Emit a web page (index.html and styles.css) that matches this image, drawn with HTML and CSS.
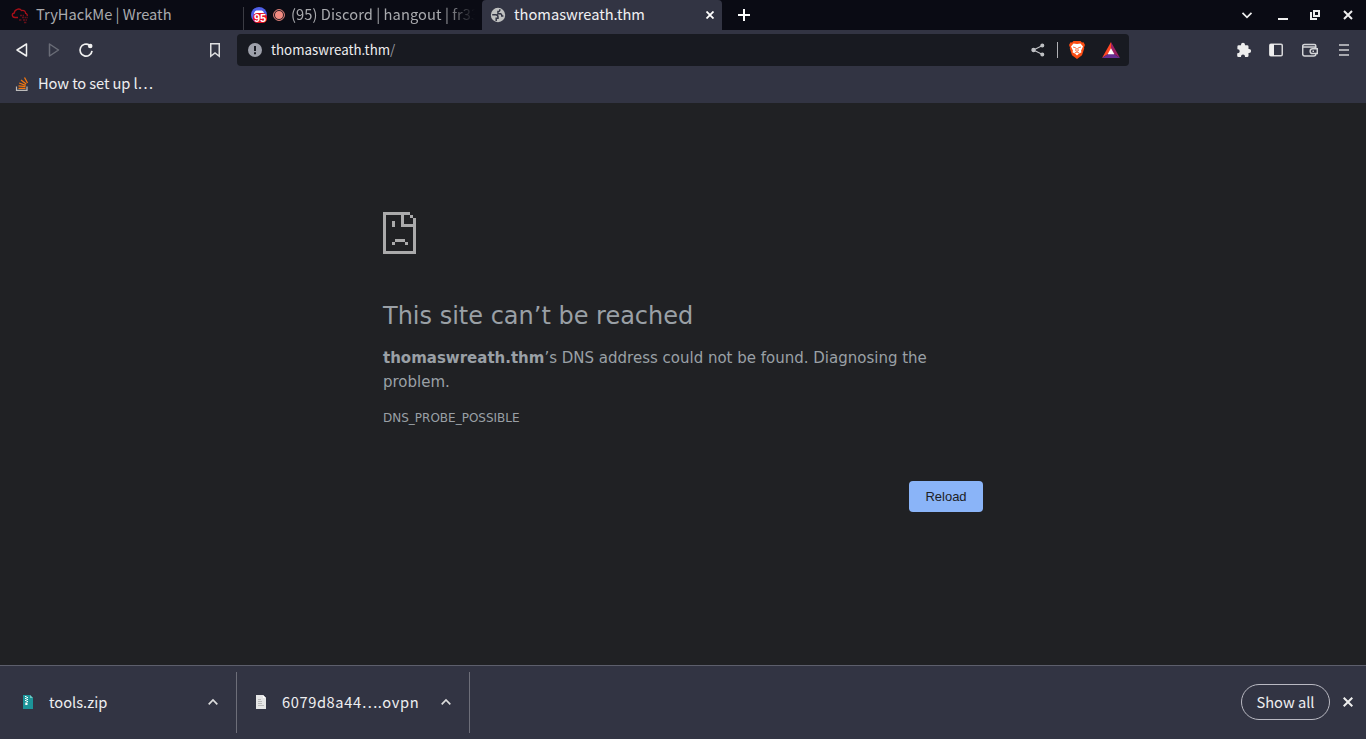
FILE: index.html
```html
<!DOCTYPE html>
<html lang="en">
<head>
<meta charset="utf-8">
<title>thomaswreath.thm</title>
<link rel="stylesheet" href="styles.css">
</head>
<body>
<header class="tabs">
  <div class="tab tab-first">
    <svg class="fav" width="18" height="18" viewBox="0 0 18 18" fill="none" stroke="#a80f18" stroke-width="1.3"><path d="M7 11.500H4C.7 11.300.4 7.600 3.300 7 3.400 3.300 8.500 1.600 10.600 4.600c2.400-.8 4 .7 4 2.700 1.500.5 1.900 1.700 1.500 2.700"/><path d="M9 9.500h4M11 11.500h6M8 14h3M12 14h4M13 16.500h3" stroke="#64101a" stroke-dasharray="2 .6"/></svg>
    <span class="t-thm">TryHackMe | Wreath</span>
  </div>
  <div class="tab tab-second">
    <svg width="18" height="18" viewBox="0 0 18 18"><circle cx="9" cy="9" r="8" fill="#5060e8"/><path d="M4 8q0-3 2.500-3.500h5Q14 5 14 8" fill="#fff"/><rect x="3" y="7" width="14" height="10" rx="4.500" fill="#e81123"/><text x="10" y="15.500" class="badge-text" text-anchor="middle">95</text></svg>
    <svg class="rec" width="12" height="12" viewBox="0 0 12 12"><circle cx="6" cy="6" r="5.400" fill="none" stroke="#f28b82"/><circle cx="6" cy="6" r="4" fill="#f28b82"/></svg>
    <span class="t-discord">(95) Discord | hangout | fr33</span>
  </div>
  <div class="tab tab-active">
    <svg width="16" height="16" viewBox="0 0 16 16"><circle cx="8" cy="8" r="7.200" fill="#bfc0c0"/><path d="M2.200 7.800h3.600q2.200.2 2.200 2.200v1.300H6.200v2.800M9.800 2.200v1.300q0 1-1.800 1v2.300h2.700q1.100.3 1.100 2.300h1.600" fill="none" stroke="#323443" stroke-width="1.500"/></svg>
    <span class="t-active">thomaswreath.thm</span>
    <svg class="tab-close" width="8" height="8" viewBox="0 0 8 8" stroke="#fff" stroke-width="1.800"><path d="M.5.5l7 7M7.500.5l-7 7"/></svg>
  </div>
  <svg class="plus" width="12" height="12" viewBox="0 0 12 12" stroke="#fff" stroke-width="2"><path d="M6 0v12M0 6h12"/></svg>
  <div class="window-buttons">
    <svg width="12" height="12" viewBox="0 0 12 12" fill="none" stroke="#eee" stroke-width="1.700"><path d="M1.500 3.800 6 8.300l4.500-4.500"/></svg>
    <svg width="10" height="12" viewBox="0 0 10 12"><path d="M0 9h10v2H0z" fill="#eee"/></svg>
    <svg width="10" height="12" viewBox="0 0 10 12" fill="none" stroke="#eee" stroke-width="2"><path d="M4 2h5v5H4zM1 3v7h6"/></svg>
    <svg width="10" height="12" viewBox="0 0 10 12" stroke="#eee" stroke-width="2"><path d="M1 2l8 8M9 2l-8 8"/></svg>
  </div>
</header>
<nav class="toolbar">
  <svg class="back" width="16" height="16" viewBox="0 0 16 16" fill="none" stroke="#f0f0f0" stroke-width="1.500" stroke-linejoin="round"><path d="M12.500 2v12L3 8z"/></svg>
  <svg class="forward" width="16" height="16" viewBox="0 0 16 16" fill="none" stroke="#6a6c77" stroke-width="1.500" stroke-linejoin="round"><path d="M3.500 2v12L12.500 8z"/></svg>
  <svg class="reload-icon" width="16" height="16" viewBox="0 0 16 16"><path d="M11.500 3.200A6 6 0 1 0 14 8.800" fill="none" stroke="#f0f0f0" stroke-width="1.700"/><circle cx="12.200" cy="4" r="2.300" fill="#f0f0f0"/></svg>
  <svg class="bookmark" width="12" height="16" viewBox="0 0 12 16" fill="none" stroke="#dedee0" stroke-width="1.500"><path d="M1.750 1.750h8.500v12.500L6 11l-4.250 3.250z"/></svg>
  <div class="address">
    <svg width="14" height="14" viewBox="0 0 14 14"><circle cx="7" cy="7" r="7" fill="#9da0aa"/><path d="M6 3h2v5H6zM6 9.300h2v2H6z" fill="#181a21"/></svg>
    <span class="t-url">thomaswreath.thm<i>/</i></span>
    <svg class="share" width="14" height="14" viewBox="0 0 14 14" fill="#bfc0c4" stroke="#bfc0c4" stroke-width="1.200"><path d="M11.500 2.500 2.500 7l9 4.500" fill="none"/><circle cx="2.500" cy="7" r="1.600"/><circle cx="11.300" cy="2.500" r="1.400"/><circle cx="11.300" cy="11.500" r="1.400"/></svg>
    <span class="split"></span>
    <svg class="brave" width="16" height="18" viewBox="0 0 16 18"><path d="M4.500 0h7l1.500 1.500 1.500-.2L16 4l-1 2.500.2 1L13 14.200 8 18l-5-3.800L.8 7.500l.2-1L0 4l1.500-2.700 1.500.2z" fill="#fb4c12"/><path d="M4.500 2.500 8 3l3.500-.5L14 5.500 12 9.700l.5 1.500-2.700 1.500L8 14.500l-1.800-1.800-2.700-1.500L4 9.700 2 5.500z" fill="#fff"/><path d="M4 6l2.800.8M12 6l-2.800.8M7.300 7 6.700 9.700 8 10.300l1.300-.6L8.700 7M5.800 12 8 11l2.200 1" fill="none" stroke="#fb4c12" stroke-width=".8"/></svg>
    <svg class="bat" width="18" height="16" viewBox="0 0 18 16"><path d="M9 0 0 16l9-6z" fill="#ff4724"/><path d="M9 0v10l9 6z" fill="#9e1f63"/><path d="M0 16l9-6 9 6z" fill="#662d91"/><path d="M9 6.200 5.600 12.300h6.800z" fill="#fff"/></svg>
  </div>
  <div class="actions">
    <svg width="16" height="16" viewBox="0 0 16 16"><path d="M2.800 3.300H5V2.800a2 2 0 0 1 4 0v.5h2.200q1.300 0 1.300 1.300V7h.6a2 2 0 0 1 0 4h-.6v2.700q0 1.300-1.300 1.300H9v-.6a2 2 0 0 0-4 0v.6H2.500q-1.300 0-1.300-1.300V11.300h.5a2 2 0 0 0 0-4h-.3V4.600q0-1.300 1.400-1.300z" fill="#eee"/></svg>
    <svg width="14" height="16" viewBox="0 0 14 16"><rect x=".75" y="2.250" width="12.500" height="11.500" rx="1.200" fill="none" stroke="#d7d7d9" stroke-width="1.500"/><path d="M1 2h4v12H1z" fill="#eee"/></svg>
    <svg class="wallet" width="16" height="16" viewBox="0 0 16 16" fill="none" stroke="#d3d4d7" stroke-width="1.500"><path d="M13.800 6V4q0-1.500-1.500-1.500H2.500Q.7 2.500.7 4.200V12q0 2 2 2h9.100q2 0 2-2M1 5h11.500l1.300 1.200"/><path d="M15.300 6.800v4.700H10.500a2.350 2.350 0 0 1 0-4.700zM10.500 9.200H12"/></svg>
    <svg width="10" height="16" viewBox="0 0 10 16" stroke="#cfd0d3" stroke-width="1.700"><path d="M0 3h10M0 8h10M0 13h10"/></svg>
  </div>
</nav>
<div class="bookmarks">
  <svg width="14" height="16" viewBox="0 0 14 16" fill="none"><path d="M1.500 10.500V14.300h10.500v-3.800" stroke="#bcbbbb" stroke-width="1.200"/><path d="M3.500 12.300h7M3.500 9.800l7 .9M4.200 7l6.500 2.300M6 4l5.200 4M9.500 1.500l3 5.500" stroke="#f47810" stroke-width="1.300"/></svg>
  <span class="t-bookmark">How to set up l…</span>
</div>
<main class="page">
  <div class="error">
    <svg class="sad" width="33" height="42" viewBox="0 0 33 42" fill="#aaaaab" shape-rendering="crispEdges"><path d="M0 0h27v3h3v3h3v36H0zM3 3v36h27V15H18V3zM21 3v9h9V6h-3V3z" fill-rule="evenodd"/><path d="M9 9h3v6H9zM12 27h10v3H12zM9 30h3v3H9zM22 30h3v3h-3z"/></svg>
    <h1>This site can’t be reached</h1>
    <p><strong>thomaswreath.thm</strong>’s DNS address could not be found. Diagnosing the problem.</p>
    <div class="code">DNS_PROBE_POSSIBLE</div>
    <button class="reload">Reload</button>
  </div>
</main>
<footer class="downloads">
  <div class="download item-zip">
    <svg width="10" height="14" viewBox="0 0 10 14"><path d="M0 0h7l3 3v11H0z" fill="#1c9499"/><path d="M7 0v3h3z" fill="#6fcac3"/><path d="M2 1h1.500v1H2zM3.500 2H5v1H3.500zM2 3h1.500v1H2zM3.500 4H5v1H3.500zM2 5h1.500v1H2zM3.500 6H5v1H3.500zM2.300 7.500h2.200V10H2.300z" fill="#fff"/></svg>
    <span class="t-zip">tools.zip</span>
    <svg class="up" width="10" height="8" viewBox="0 0 10 8" fill="none" stroke="#ddd" stroke-width="1.700"><path d="M.7 6.300 5 2l4.300 4.300"/></svg>
  </div>
  <div class="download item-ovpn">
    <svg width="10" height="14" viewBox="0 0 10 14"><path d="M0 0h7l3 3v11H0z" fill="#e6e6e6"/><path d="M7 0v3h3z" fill="#fff"/><path d="M2 4.500h3M2 6.500h4M2 8.500h4M2 10.500h6" stroke="#bbb"/></svg>
    <span class="t-ovpn">6079d8a44….ovpn</span>
    <svg class="up" width="10" height="8" viewBox="0 0 10 8" fill="none" stroke="#ddd" stroke-width="1.700"><path d="M.7 6.300 5 2l4.300 4.300"/></svg>
  </div>
  <button class="show-all">Show all</button>
  <svg class="shelf-close" width="10" height="10" viewBox="0 0 10 10" stroke="#eee" stroke-width="2"><path d="M.7.7l8.600 8.600M9.300.7.7 9.300"/></svg>
</footer>
</body>
</html>
```
FILE: styles.css
```css
* { box-sizing: border-box; }
body {
  margin: 0;
  width: 1366px;
  height: 739px;
  display: flex;
  flex-direction: column;
  overflow: hidden;
  background: #202124;
  color: #eeeef0;
  font: 14.667px/20px "Noto Sans CJK JP", sans-serif;
  white-space: nowrap;
}
svg { display: block; flex: none; }
.tabs { height: 30px; display: flex; align-items: center; background: #0a0b14; }
.tab { height: 30px; display: flex; align-items: center; color: #a9aaae; overflow: hidden; }
.tab span, .t-bookmark { padding-bottom: 2px; }
.tab-first { width: 243px; padding-left: 11px; gap: 7px; }
.tab-second {
  width: 239px;
  padding-left: 7px;
  background: linear-gradient(#3b3c44, #3b3c44) 0 7px / 1px 23px no-repeat;
}
.rec { margin: 0 6px 0 5px; }
.badge-text { font: bold 11px "Liberation Sans", sans-serif; fill: #fff; }
.t-discord {
  width: 184px;
  overflow: hidden;
  letter-spacing: 0.07px;
  -webkit-mask-image: linear-gradient(90deg, #000 153px, transparent 184px);
  mask-image: linear-gradient(90deg, #000 153px, transparent 184px);
}
.tab-active { width: 240px; padding: 0 8px; gap: 8px; background: #323443; color: #f0f0f2; border-radius: 4px 4px 0 0; }
.tab-close { margin-left: auto; }
.plus { margin-left: 16px; }
.window-buttons { margin: 0 13px 0 auto; display: flex; align-items: center; }
.window-buttons svg:nth-child(2) { margin-left: 25px; }
.window-buttons svg:nth-child(3) { margin-left: 22px; }
.window-buttons svg:nth-child(4) { margin-left: 23px; }
.toolbar { height: 40px; display: flex; align-items: center; background: #323443; padding: 0 17px 0 14px; }
.forward { margin-left: 16px; }
.reload-icon { margin-left: 16px; }
.bookmark { margin-left: 115px; }
.address {
  margin-left: 16px;
  width: 892px;
  height: 32px;
  padding: 0 9px 0 11px;
  display: flex;
  align-items: center;
  border-radius: 4px;
  background: #181a21;
}
.t-url { margin-left: 9px; font-size: 13.333px; }
.t-url i { font-style: normal; color: #999ba2; }
.share { margin-left: auto; }
.split { width: 1px; height: 16px; margin: 0 11px 0 12px; background: #b0b1b5; }
.bat { margin-left: 17px; }
.actions { margin-left: auto; display: flex; align-items: center; }
.actions svg:nth-child(2) { margin-left: 17px; }
.actions svg:nth-child(3) { margin-left: 19px; }
.actions svg:nth-child(4) { margin-left: 21px; }
.bookmarks { height: 33px; padding: 0 0 5px 15px; display: flex; align-items: center; gap: 9px; background: #323443; }
.t-bookmark { letter-spacing: -0.1px; }
.page { height: 562px; padding-top: 109px; white-space: normal; }
.error {
  width: 600px;
  margin: 0 auto;
  color: #9aa0a6;
  font: 15px/24px "DejaVu Sans", sans-serif;
  display: flex;
  flex-direction: column;
}
.error h1 { margin: 48px 0 15px; font-size: 24px; line-height: 29px; font-weight: 500; }
.error p { margin: 0; }
.code { margin-top: 15px; font-size: 12px; line-height: 18px; }
.reload {
  align-self: flex-end;
  margin-top: 54px;
  width: 74px;
  height: 31px;
  padding: 0;
  border: 0;
  border-radius: 4px;
  background: #8ab4f8;
  color: #202124;
  font: 13px "Liberation Sans", sans-serif;
}
.downloads { height: 74px; padding-bottom: 1px; display: flex; align-items: center; background: #323443; border-top: 1px solid #5d5f6c; }
.download { height: 61px; display: flex; align-items: center; border-right: 1px solid #6d6e79; }
.item-zip { width: 237px; padding: 0 18px 0 23px; }
.item-ovpn { width: 233px; padding: 0 18px 0 19px; }
.download span { margin-left: 16px; }
.t-ovpn { letter-spacing: 0.6px; }
.up { margin-left: auto; }
.show-all {
  width: 89px;
  height: 36px;
  margin-left: auto;
  padding: 0;
  border: 1px solid #b9b9c2;
  border-radius: 18px;
  background: transparent;
  color: #eeeef0;
  font: 14.667px/20px "Noto Sans CJK JP", sans-serif;
}
.shelf-close { margin: 0 13px; }
```
